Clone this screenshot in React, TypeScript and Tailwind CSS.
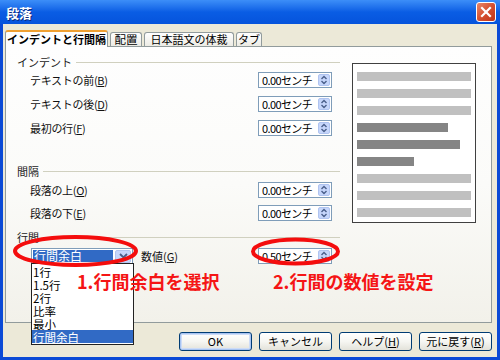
import React from "react";

function Spin() {
  return (
    <div className="w-[12px] h-[12px] rounded-[2px] bg-[#c6d6fb] border border-[#b0c4f0] flex items-center justify-center">
      <svg width="8" height="10" viewBox="0 0 8 10">
        <path d="M1.5 4 L4 1.5 L6.5 4" stroke="#4a5f8a" strokeWidth="1.4" fill="none" />
        <path d="M1.5 6 L4 8.5 L6.5 6" stroke="#4a5f8a" strokeWidth="1.4" fill="none" />
      </svg>
    </div>
  );
}

function NumInput({ value }: { value: string }) {
  return (
    <div className="w-[74px] h-[16px] border border-[#7f9db9] bg-white flex items-center justify-between pl-[3px] pr-[1px]">
      <span className="text-[11px] leading-none tracking-[-0.6px] text-black">{value}</span>
      <Spin />
    </div>
  );
}

function Row({ label, mn, value }: { label: string; mn: string; value: string }) {
  return (
    <div className="h-[16px] flex items-center justify-between pl-[13px] pr-[8px]">
      <span className="text-[11px] leading-none text-[#111] tracking-[-0.3px]">
        {label}(<span className="underline">{mn}</span>)
      </span>
      <NumInput value={value} />
    </div>
  );
}

function Header({ text }: { text: string }) {
  return (
    <div className="h-[12px] flex items-center">
      <span className="text-[11px] leading-none text-[#222]">{text}</span>
      <div className="flex-1 ml-[4px] border-t border-[#d0d0bf]" />
    </div>
  );
}

function Btn({ children, def }: { children: React.ReactNode; def?: boolean }) {
  return (
    <div
      className={
        "w-[73px] h-[19px] rounded-[3px] border border-[#003c74] bg-gradient-to-b from-[#ffffff] via-[#f6f6f2] to-[#e3e2da] flex items-center justify-center text-[11px] leading-none text-black " +
        (def ? "shadow-[inset_0_0_0_1px_#a8c4f2,inset_0_0_0_2px_#cddcf7]" : "")
      }
    >
      {children}
    </div>
  );
}

export default function App() {
  const light = "bg-[#c0c0c0]";
  const dark = "bg-[#858585]";
  return (
    <div className="relative w-[500px] h-[360px] overflow-hidden bg-[#0b4ad6] flex flex-col font-['Noto_Sans_CJK_JP','Noto_Sans',sans-serif] text-[#111]">
      {/* title bar */}
      <div className="h-[24px] flex items-center justify-between pl-[6px] pr-[4px] bg-gradient-to-b from-[#3c8ef8] via-[#0a5de4] to-[#0653dc]">
        <span className="text-white font-bold text-[13px] leading-none [text-shadow:1px_1px_0_#0a2a80]">段落</span>
        <div className="w-[20px] h-[20px] rounded-[3px] border border-white bg-gradient-to-br from-[#e8866a] via-[#d5502f] to-[#bf3418] flex items-center justify-center">
          <svg width="12" height="12" viewBox="0 0 12 12">
            <path d="M2 2 L10 10 M10 2 L2 10" stroke="white" strokeWidth="2.2" strokeLinecap="square" />
          </svg>
        </div>
      </div>

      {/* body */}
      <div className="flex-1 mx-[3px] mb-[3px] bg-[#ece9d8] flex flex-col pt-[6px] pl-[2px] pr-[5px]">
        {/* tabs */}
        <div className="h-[16px] flex items-end relative z-10">
          <div className="w-[103px] h-[17px] -mb-px bg-[#fefefe] border border-b-0 border-[#919b9c] border-t-2 border-t-[#f0a030] rounded-t-[3px] flex items-center justify-center">
            <span className="text-[11px] font-bold leading-none text-black">インデントと行間隔</span>
          </div>
          <div className="ml-[2px] w-[32px] h-[14px] bg-gradient-to-b from-[#ffffff] to-[#ecebe5] border border-b-0 border-[#919b9c] rounded-t-[3px] flex items-center justify-center">
            <span className="text-[11.5px] leading-none text-black">配置</span>
          </div>
          <div className="ml-[2px] w-[90px] h-[14px] bg-gradient-to-b from-[#ffffff] to-[#ecebe5] border border-b-0 border-[#919b9c] rounded-t-[3px] flex items-center justify-center">
            <span className="text-[11px] leading-none text-black">日本語文の体裁</span>
          </div>
          <div className="ml-[2px] w-[26px] h-[14px] bg-gradient-to-b from-[#ffffff] to-[#ecebe5] border border-b-0 border-[#919b9c] rounded-t-[3px] flex items-center justify-center">
            <span className="text-[11px] leading-none text-black">タブ</span>
          </div>
        </div>

        {/* panel */}
        <div className="h-[277px] border border-[#919b9c] bg-gradient-to-b from-[#fefefe] via-[#fbfbf9] to-[#f2f1ea] flex pl-[11px]">
          {/* left column */}
          <div className="w-[323px] flex flex-col pt-[9px]">
            <Header text="インデント" />
            <div className="mt-[4px] flex flex-col gap-[8px]">
              <Row label="テキストの前" mn="B" value="0.00センチ" />
              <Row label="テキストの後" mn="D" value="0.00センチ" />
              <Row label="最初の行" mn="F" value="0.00センチ" />
            </div>
            <div className="mt-[29px]">
              <Header text="間隔" />
            </div>
            <div className="mt-[5px] flex flex-col gap-[7px]">
              <Row label="段落の上" mn="O" value="0.00センチ" />
              <Row label="段落の下" mn="E" value="0.00センチ" />
            </div>
            <div className="mt-[10px]">
              <Header text="行間" />
            </div>
            <div className="mt-[5px] h-[16px] flex items-center pl-[14px] pr-[8px]">
              <div className="w-[102px] h-[16px] border border-[#7f9db9] bg-white flex items-center pl-[1px] pr-[1px]">
                <div className="flex-1 h-[12px] bg-[#316ac5] flex items-center pl-[1px]">
                  <span className="text-[12px] leading-none text-white">行間余白</span>
                </div>
                <div className="ml-[2px] w-[16px] h-[13px] rounded-[2px] bg-[#c6d6fb] border border-[#b0c4f0] flex items-center justify-center">
                  <svg width="9" height="6" viewBox="0 0 9 6">
                    <path d="M1 1 L4.5 4.5 L8 1" stroke="#4a5f8a" strokeWidth="1.8" fill="none" />
                  </svg>
                </div>
              </div>
              <span className="ml-[8px] text-[11px] leading-none text-[#111]">
                数値(<span className="underline">G</span>)
              </span>
              <div className="ml-auto">
                <NumInput value="0.50センチ" />
              </div>
            </div>
          </div>

          {/* preview */}
          <div className="ml-[12px] mt-[16px] w-[124px] h-[160px] border border-[#404040] bg-white flex flex-col gap-[8px] pt-[8px] pl-[4px]">
            <div className={"h-[9px] w-[114px] " + light} />
            <div className={"h-[9px] w-[114px] " + light} />
            <div className={"h-[9px] w-[114px] " + light} />
            <div className={"h-[9px] w-[91px] " + dark} />
            <div className={"h-[9px] w-[103px] " + dark} />
            <div className={"h-[9px] w-[57px] " + dark} />
            <div className={"h-[9px] w-[114px] " + light} />
            <div className={"h-[9px] w-[114px] " + light} />
            <div className={"h-[9px] w-[114px] " + light} />
          </div>
        </div>

        {/* buttons */}
        <div className="mt-[9px] flex justify-end gap-[7px]">
          <Btn def>OK</Btn>
          <Btn>キャンセル</Btn>
          <Btn>
            ヘルプ(<span className="underline">H</span>)
          </Btn>
          <Btn>
            元に戻す(<span className="underline">R</span>)
          </Btn>
        </div>
      </div>

      {/* dropdown list overlay */}
      <div className="absolute left-[31px] top-[263px] w-[103px] border border-[#222] bg-white flex flex-col py-[1px]">
        {["1行", "1.5行", "2行", "比率", "最小", "行間余白"].map((t, i) => (
          <div
            key={t}
            className={
              "h-[13px] flex items-center pl-[1px] text-[11.5px] leading-[12px] overflow-hidden " +
              (i === 5 ? "bg-[#316ac5] text-white" : "text-black")
            }
          >
            {t}
          </div>
        ))}
      </div>

      {/* annotation ellipses */}
      <svg className="absolute inset-0 pointer-events-none" width="500" height="360" viewBox="0 0 500 360">
        <ellipse cx="75.5" cy="251" rx="60.5" ry="14" fill="none" stroke="#f40d0d" strokeWidth="4" />
        <ellipse cx="295.5" cy="251.5" rx="42.5" ry="12" fill="none" stroke="#f40d0d" strokeWidth="4" />
      </svg>

      {/* annotation texts */}
      <div className="absolute left-[77px] top-[271px] text-[18px] leading-[20px] font-bold text-[#f51515] whitespace-nowrap">
        1.行間余白を選択
      </div>
      <div className="absolute left-[273px] top-[271px] text-[18px] leading-[20px] font-bold text-[#f51515] whitespace-nowrap">
        2.行間の数値を設定
      </div>
    </div>
  );
}
